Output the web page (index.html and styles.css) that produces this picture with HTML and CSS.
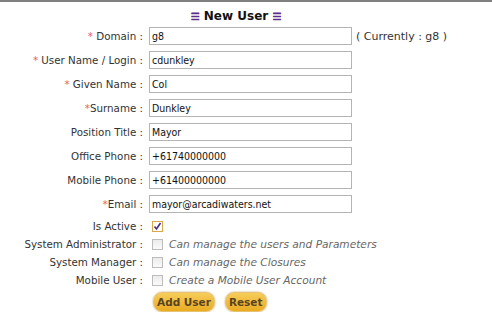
FILE: index.html
```html
<!DOCTYPE html>
<html lang="en">
<head>
    <meta charset="UTF-8">
    <title>New User</title>
    <link rel="stylesheet" href="styles.css">
</head>
<body>
    <div class="form">
        <h1 class="title"><span class="ico">&#9776;</span> New User <span class="ico">&#9776;</span></h1>

        <div class="row">
            <label><span class="req">*</span> Domain :</label>
            <input type="text" value="g8">
            <span class="note">( Currently : g8 )</span>
        </div>
        <div class="row">
            <label><span class="req">*</span> User Name / Login :</label>
            <input type="text" value="cdunkley">
        </div>
        <div class="row">
            <label><span class="req">*</span> Given Name :</label>
            <input type="text" value="Col">
        </div>
        <div class="row">
            <label><span class="req">*</span>Surname :</label>
            <input type="text" value="Dunkley">
        </div>
        <div class="row">
            <label>Position Title :</label>
            <input type="text" value="Mayor">
        </div>
        <div class="row">
            <label>Office Phone :</label>
            <input type="text" value="+61740000000">
        </div>
        <div class="row">
            <label>Mobile Phone :</label>
            <input type="text" value="+61400000000">
        </div>
        <div class="row">
            <label><span class="req">*</span>Email :</label>
            <input type="text" value="mayor@arcadiwaters.net">
        </div>

        <div class="row check first">
            <label>Is Active :</label>
            <span class="box on">
                <svg width="9" height="9" viewBox="0 0 9 9"><path d="M1.5 4.5 L3.5 7 L7.5 1" fill="none" stroke="#4b2a8a" stroke-width="1.6"/></svg>
            </span>
        </div>
        <div class="row check">
            <label>System Administrator :</label>
            <span class="box"></span>
            <span class="desc">Can manage the users and Parameters</span>
        </div>
        <div class="row check">
            <label>System Manager :</label>
            <span class="box"></span>
            <span class="desc">Can manage the Closures</span>
        </div>
        <div class="row check">
            <label>Mobile User :</label>
            <span class="box"></span>
            <span class="desc">Create a Mobile User Account</span>
        </div>

        <div class="buttons">
            <button type="submit">Add User</button>
            <button type="reset">Reset</button>
        </div>
    </div>
</body>
</html>
```

FILE: styles.css
```css
body {
    margin: 0;
    border-top: 2px solid #808080;
    background: #fff;
    font-family: "DejaVu Sans", Verdana, sans-serif;
    font-size: 10.3px;
    color: #333;
}
.form {
    width: 456px;
    padding-left: 8px;
}
.title {
    margin: 0;
    height: 25px;
    padding-top: 3px;
    box-sizing: border-box;
    line-height: 22px;
    font-size: 12px;
    font-weight: bold;
    text-align: center;
    color: #111;
}
.ico {
    font-size: 10px;
    color: #5b2d8c;
    -webkit-text-stroke: 0.6px #5b2d8c;
}
.row {
    display: flex;
    align-items: center;
    height: 18px;
    margin-bottom: 6px;
}
.row label {
    width: 135px;
    text-align: right;
    white-space: nowrap;
}
.req {
    color: #e36262;
}
.row input {
    width: 203px;
    height: 18px;
    box-sizing: border-box;
    margin: 0 0 0 6px;
    padding: 0 2px;
    border: 1px solid #b4b4b4;
    font-family: "DejaVu Sans Condensed", "DejaVu Sans", sans-serif;
    font-size: 10.5px;
    color: #111;
}
.note {
    margin-left: 4px;
    font-size: 11px;
}
.row.check {
    margin-bottom: 0;
}
.row.check.first {
    margin-top: -2px;
}
.box {
    display: flex;
    align-items: center;
    justify-content: center;
    width: 11px;
    height: 11px;
    box-sizing: border-box;
    margin-left: 9px;
    border: 1px solid #bcbcbc;
    background: linear-gradient(#ececec, #fafafa);
}
.box.on {
    border-color: #d9a84a;
    background: #fff;
}
.desc {
    margin-left: 6px;
    font-size: 10.6px;
    font-style: italic;
    color: #666;
}
.buttons {
    display: flex;
    gap: 10px;
    margin: 3px 0 0 145px;
}
.buttons button {
    height: 20px;
    padding: 0 3px;
    border: 1px solid #e6c273;
    border-radius: 9px;
    background: linear-gradient(#f7cd5a, #e9ab22);
    box-shadow: 0 0 2px #c9a060;
    font-family: "DejaVu Sans", Verdana, sans-serif;
    font-size: 10.5px;
    font-weight: bold;
    color: #5a4420;
    cursor: pointer;
}
```
